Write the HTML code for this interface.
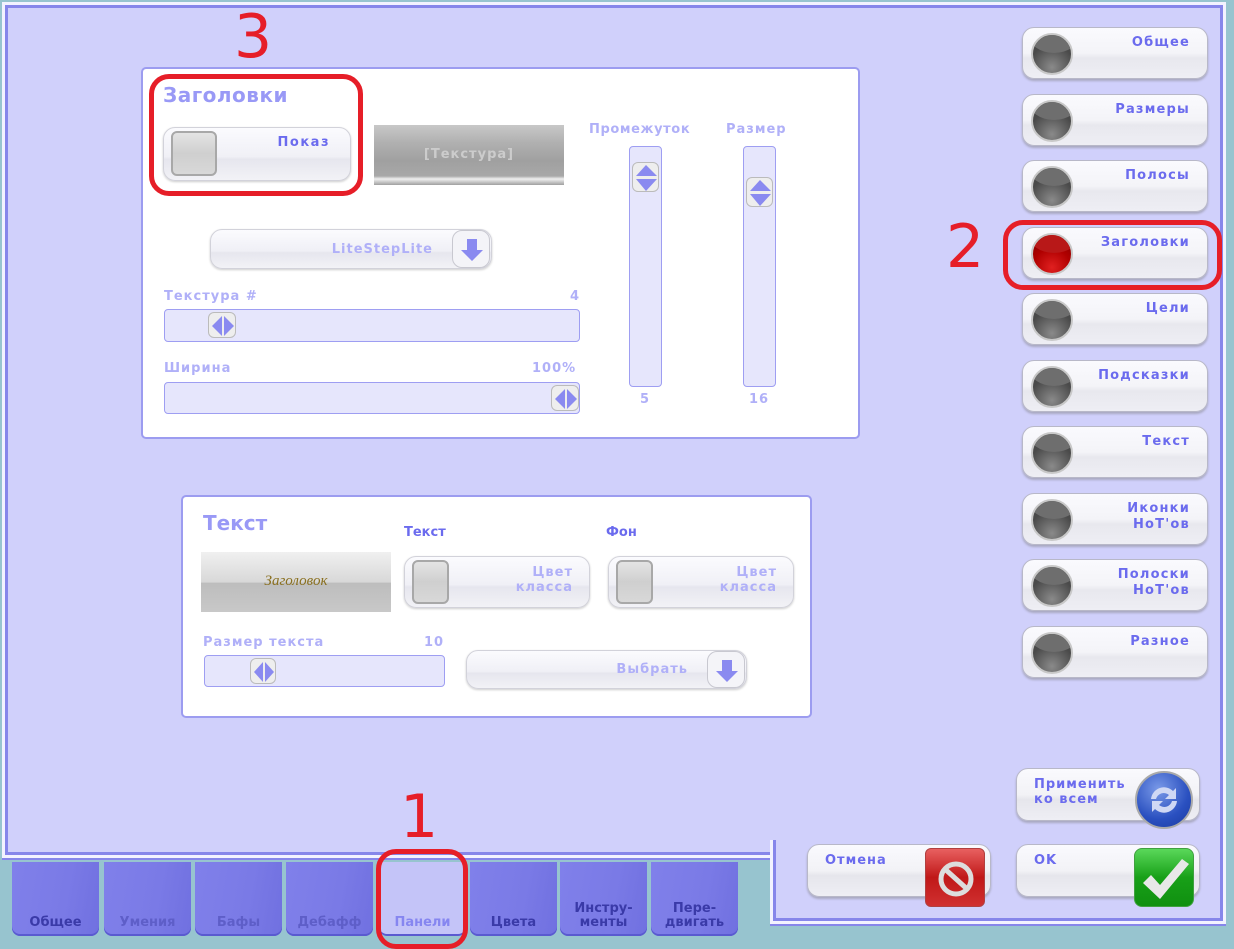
<!DOCTYPE html>
<html><head><meta charset="utf-8">
<style>
*{margin:0;padding:0;box-sizing:border-box}
body{width:1234px;height:942px;position:relative;overflow:hidden;background:#97c4cf;font-family:"DejaVu Sans","Liberation Sans",sans-serif;font-weight:bold}
.a{position:absolute}
.frame{left:2px;top:2px;width:1224px;height:856px;background:#d0d0fb;border:3px solid #f2f2ff;box-shadow:inset 0 0 0 3px #8686ea, 0 2px 0 #8686ea}
.frame2{left:770px;top:840px;width:456px;height:84px;background:#d0d0fb;border:3px solid #f2f2ff;border-top:none;box-shadow:inset 3px -3px 0 #8686ea, inset -3px 0 0 #8686ea, 0 2px 0 #8686ea}
.panel{background:#fff;border:2px solid #9c9cf0;border-radius:5px}
.rb{left:1022px;width:186px;height:52px;border-radius:12px;background:linear-gradient(#fafafe 0%,#f4f4f8 50%,#e8e8ee 60%,#eeeef4 100%);border:1px solid #b8b8c8;box-shadow:0 2px 2px #a8a8c0}
.rb .c{position:absolute;left:8px;top:5px;width:42px;height:42px;border-radius:50%;background:radial-gradient(circle at 50% 85%,#8a8a8a 0%,#5a5a5a 45%,#4a4a4a 60%);border:2px solid #c8c8c8;overflow:hidden}
.rb .c:before{content:"";position:absolute;left:-4px;top:-18px;width:50px;height:36px;border-radius:50%;background:#6e6e6e}
.rb .c.red{background:radial-gradient(circle at 50% 85%,#e02020 0%,#b00000 50%,#900 70%)}
.rb .c.red:before{background:#b81818}
.rb .t{position:absolute;right:17px;top:7px;text-align:right;color:#6b6bee;font-size:13px;letter-spacing:1.2px;line-height:16px}
.lbl{color:#b0b0f8;font-size:13px;letter-spacing:1px}
.track{background:#e6e6fc;border:1px solid #9e9ef2;border-radius:4px}
.knob{width:28px;height:26px;border:1px solid #bbb;border-radius:6px;background:#eee}
.tab{top:862px;width:87px;height:74px;border-radius:0 0 8px 8px;background:linear-gradient(100deg,#8080ea 0%,#7a7ae6 60%,#7070e0 100%);box-shadow:inset 0 -2px 0 #5a5ad0;text-align:center;font-size:13px;color:#3a3aa8;display:flex;align-items:flex-end;justify-content:center;padding-bottom:6px;line-height:14px}
.tab.d{color:#5e5ec8}
.tab.s{background:#c4c4f8;color:#8686f0}
.pill{background:linear-gradient(#fbfbfe,#f0f0f6 55%,#e6e6ee 60%,#f2f2f6);border:1px solid #d2d2da;border-radius:12px;box-shadow:0 1px 2px #ccc}
.sq{position:absolute;background:linear-gradient(#e4e4e4,#cfcfcf 50%,#d8d8d8);border:2px solid #a8a8a8;border-radius:6px}
.red{border:5px solid #e61e28;border-radius:20px}
.num{color:#e61e28;font-weight:normal;font-size:60px;font-family:"DejaVu Sans","Liberation Sans",sans-serif}
.btn{border-radius:12px;background:linear-gradient(#fafafe,#f2f2f6 50%,#e6e6ec 60%,#eeeef4);border:1px solid #b8b8c8;box-shadow:0 2px 2px #a8a8c0}
</style></head><body>
<div class="a frame"></div>
<div class="a frame2"></div>

<div class="a tab" style="left:12px">Общее</div>
<div class="a tab d" style="left:104px">Умения</div>
<div class="a tab d" style="left:195px">Бафы</div>
<div class="a tab d" style="left:286px">Дебафф</div>
<div class="a tab s" style="left:379px">Панели</div>
<div class="a tab" style="left:470px">Цвета</div>
<div class="a tab" style="left:560px">Инстру-<br>менты</div>
<div class="a tab" style="left:651px">Пере-<br>двигать</div>

<div class="a panel" style="left:141px;top:67px;width:719px;height:372px"></div>
<div class="a" style="left:163px;top:83px;font-size:20px;color:#9999f6;letter-spacing:0.5px">Заголовки</div>
<div class="a pill" style="left:163px;top:127px;width:188px;height:54px"><div class="sq" style="left:7px;top:3px;width:46px;height:45px"></div><div class="a" style="right:20px;top:7px;color:#6b6bee;font-size:13px;letter-spacing:1.5px">Показ</div></div>
<div class="a" style="left:374px;top:125px;width:190px;height:60px;background:linear-gradient(#c8c8c8,#b0b0b0 30%,#a0a0a0 60%,#a8a8a8 85%,#f0f0f0 90%,#a0a0a0 100%);color:#ccc;font-size:13px;text-align:center;line-height:60px;letter-spacing:1px">[Текстура]</div>
<div class="a pill" style="left:210px;top:229px;width:282px;height:40px"><div class="a" style="right:58px;top:12px;color:#b0b0f8;font-size:13px;letter-spacing:1px">LiteStepLite</div><div class="a" style="right:1px;top:0;width:38px;height:38px;border:1px solid #c8c8d0;border-radius:10px;background:#f4f4f8"><svg width="38" height="38"><path d="M14 8h10v11h6L19 30 8 19h6z" fill="#8a8af0"/></svg></div></div>
<div class="a lbl" style="left:164px;top:289px">Текстура #</div>
<div class="a lbl" style="left:570px;top:289px">4</div>
<div class="a track" style="left:164px;top:309px;width:416px;height:33px"></div>
<div class="a knob" style="left:208px;top:312px"><svg width="28" height="26"><path d="M13 3L3 13 13 23z" fill="#8a8af0"/><path d="M15 3L25 13 15 23z" fill="#8a8af0"/></svg></div>
<div class="a lbl" style="left:164px;top:361px">Ширина</div>
<div class="a lbl" style="left:532px;top:361px">100%</div>
<div class="a track" style="left:164px;top:382px;width:416px;height:32px"></div>
<div class="a knob" style="left:551px;top:385px"><svg width="28" height="26"><path d="M13 3L3 13 13 23z" fill="#8a8af0"/><path d="M15 3L25 13 15 23z" fill="#8a8af0"/></svg></div>
<div class="a lbl" style="left:589px;top:122px;font-size:13px;letter-spacing:0.6px">Промежуток</div>
<div class="a lbl" style="left:726px;top:122px;font-size:13px">Размер</div>
<div class="a track" style="left:629px;top:146px;width:33px;height:241px"></div>
<div class="a track" style="left:743px;top:146px;width:33px;height:241px"></div>
<div class="a knob" style="left:632px;top:162px;width:27px;height:30px"><svg width="27" height="30"><path d="M3 13L13 2 24 13z" fill="#8a8af0"/><path d="M3 16L13 28 24 16z" fill="#8a8af0"/></svg></div>
<div class="a knob" style="left:746px;top:177px;width:27px;height:30px"><svg width="27" height="30"><path d="M3 13L13 2 24 13z" fill="#8a8af0"/><path d="M3 16L13 28 24 16z" fill="#8a8af0"/></svg></div>
<div class="a lbl" style="left:640px;top:392px">5</div>
<div class="a lbl" style="left:749px;top:392px">16</div>

<div class="a panel" style="left:181px;top:495px;width:631px;height:223px"></div>
<div class="a" style="left:203px;top:511px;font-size:20px;color:#9999f6">Текст</div>
<div class="a" style="left:404px;top:525px;font-size:13px;color:#6b6bee">Текст</div>
<div class="a" style="left:606px;top:525px;font-size:13px;color:#6b6bee">Фон</div>
<div class="a" style="left:201px;top:552px;width:190px;height:60px;background:linear-gradient(#f0f0f0,#d8d8d8 50%,#bdbdbd 52%,#c8c8c8);color:#8a7020;font-style:italic;font-weight:normal;font-family:'Liberation Serif',serif;font-size:15px;text-align:center;line-height:58px">Заголовок</div>
<div class="a pill" style="left:404px;top:556px;width:186px;height:52px"><div class="sq" style="left:7px;top:3px;width:37px;height:44px"></div><div class="a lbl" style="right:16px;top:8px;text-align:right;line-height:15px">Цвет<br>класса</div></div>
<div class="a pill" style="left:608px;top:556px;width:186px;height:52px"><div class="sq" style="left:7px;top:3px;width:37px;height:44px"></div><div class="a lbl" style="right:16px;top:8px;text-align:right;line-height:15px">Цвет<br>класса</div></div>
<div class="a lbl" style="left:203px;top:635px">Размер текста</div>
<div class="a lbl" style="left:424px;top:635px">10</div>
<div class="a track" style="left:204px;top:655px;width:241px;height:32px"></div>
<div class="a knob" style="left:250px;top:658px;width:26px"><svg width="26" height="26"><path d="M12 3L3 13 12 23z" fill="#8a8af0"/><path d="M14 3L23 13 14 23z" fill="#8a8af0"/></svg></div>
<div class="a pill" style="left:466px;top:650px;width:281px;height:39px"><div class="a lbl" style="right:58px;top:11px">Выбрать</div><div class="a" style="right:1px;top:0;width:38px;height:37px;border:1px solid #c8c8d0;border-radius:10px;background:#f4f4f8"><svg width="38" height="37"><path d="M14 8h10v11h6L19 30 8 19h6z" fill="#8a8af0"/></svg></div></div>

<div class="a rb" style="top:27px"><div class="c"></div><div class="t">Общее</div></div>
<div class="a rb" style="top:94px"><div class="c"></div><div class="t">Размеры</div></div>
<div class="a rb" style="top:160px"><div class="c"></div><div class="t">Полосы</div></div>
<div class="a rb" style="top:227px"><div class="c red"></div><div class="t">Заголовки</div></div>
<div class="a rb" style="top:293px"><div class="c"></div><div class="t">Цели</div></div>
<div class="a rb" style="top:360px"><div class="c"></div><div class="t">Подсказки</div></div>
<div class="a rb" style="top:426px"><div class="c"></div><div class="t">Текст</div></div>
<div class="a rb" style="top:493px"><div class="c"></div><div class="t">Иконки<br>НоТ'ов</div></div>
<div class="a rb" style="top:559px"><div class="c"></div><div class="t">Полоски<br>НоТ'ов</div></div>
<div class="a rb" style="top:626px"><div class="c"></div><div class="t">Разное</div></div>

<div class="a btn" style="left:1016px;top:768px;width:184px;height:53px"><div class="a" style="left:17px;top:8px;color:#6b6bee;font-size:13px;letter-spacing:1px;line-height:15px">Применить<br>ко всем</div></div>
<div class="a" style="left:1135px;top:771px;width:58px;height:58px;border-radius:50%;background:radial-gradient(circle at 40% 30%,#7a9ae8,#2a50c0 60%,#1a3aa0);border:2px solid #aaa"><svg width="54" height="54"><path d="M14 26a13 13 0 0 1 22-8l3-3v11H28l4-4a8 8 0 0 0-13 4z" fill="#cfd8f4"/><path d="M40 28a13 13 0 0 1-22 8l-3 3V28h11l-4 4a8 8 0 0 0 13-4z" fill="#cfd8f4"/></svg></div>
<div class="a btn" style="left:807px;top:844px;width:184px;height:53px"><div class="a" style="left:17px;top:8px;color:#6b6bee;font-size:13px;letter-spacing:1px">Отмена</div></div>
<div class="a" style="left:925px;top:848px;width:60px;height:59px;border-radius:6px;background:linear-gradient(#e86060,#c01818 50%,#d03030);border:1px solid #b04040"><svg width="60" height="59"><circle cx="30" cy="30" r="15" fill="none" stroke="#ddd" stroke-width="5"/><path d="M20 21L40 39" stroke="#ddd" stroke-width="5"/></svg></div>
<div class="a btn" style="left:1016px;top:844px;width:184px;height:53px"><div class="a" style="left:17px;top:8px;color:#6b6bee;font-size:13px;letter-spacing:1px">OK</div></div>
<div class="a" style="left:1134px;top:848px;width:60px;height:59px;border-radius:8px;background:linear-gradient(#5ad85a,#18a018 50%,#109010);border:1px solid #40a040"><svg width="60" height="59"><path d="M8 34l8-8 9 10 22-26 7 5-29 35z" fill="#e8e8e8"/></svg></div>

<div class="a red" style="left:149px;top:74px;width:214px;height:122px"></div>
<div class="a red" style="left:1003px;top:220px;width:219px;height:70px"></div>
<div class="a red" style="left:376px;top:849px;width:92px;height:100px"></div>
<div class="a num" style="left:234px;top:2px">3</div>
<div class="a num" style="left:946px;top:212px">2</div>
<div class="a num" style="left:400px;top:782px">1</div>
</body></html>
